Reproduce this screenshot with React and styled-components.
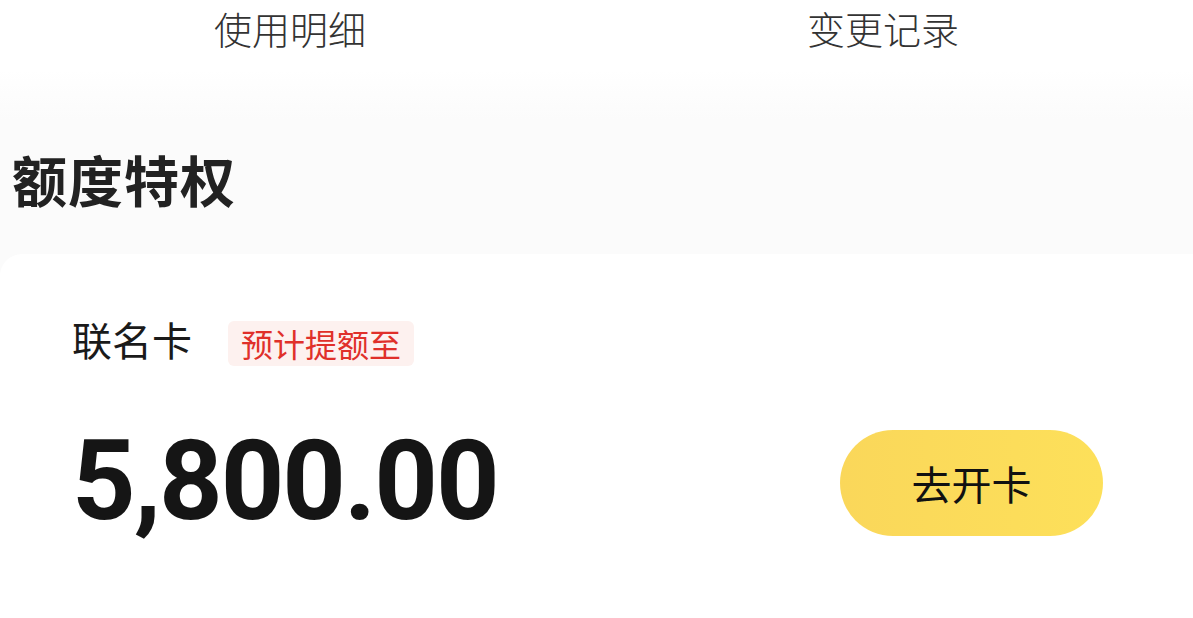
import React from "react";
import styled, { createGlobalStyle } from "styled-components";

const GlobalStyle = createGlobalStyle`
  html, body {
    margin: 0;
    padding: 0;
    background: #fbfbfb;
    font-family: "Noto Sans CJK SC", "Noto Sans", sans-serif;
  }
`;

const Page = styled.div`
  width: 1193px;
  height: 618px;
  overflow: hidden;
  background: linear-gradient(#ffffff 0, #ffffff 70px, #fbfbfb 120px, #fbfbfb 100%);
`;

const Tabs = styled.div`
  display: flex;
  height: 62px;
`;

const Tab = styled.div`
  flex: 0 0 ${(p) => p.w}px;
  text-align: center;
  font-size: 38px;
  font-weight: 300;
  color: #333;
  line-height: 56px;
`;

const Title = styled.h2`
  margin: 80px 0 0 12px;
  font-size: 55px;
  font-weight: 700;
  color: #222;
  line-height: 72px;
  letter-spacing: 1px;
`;

const Card = styled.div`
  margin-top: 40px;
  margin-right: -40px;
  background: #fff;
  border-radius: 22px 0 0 0;
  height: 400px;
  padding: 61px 0 0 72px;
  box-sizing: border-box;
`;

const CardHead = styled.div`
  display: flex;
  align-items: center;
  gap: 36px;
`;

const CardName = styled.span`
  font-size: 40px;
  color: #1a1a1a;
  line-height: 56px;
  margin-top: -4px;
`;

const Badge = styled.span`
  background: #fdf1ef;
  color: #e0302a;
  font-size: 32px;
  line-height: 45px;
  padding: 0 13px;
  border-radius: 6px;
  margin-top: 4px;
`;

const Row = styled.div`
  display: flex;
  align-items: center;
  justify-content: space-between;
  margin-top: 58px;
  padding-right: 130px;
`;

const Amount = styled.div`
  font-family: Roboto, "Liberation Sans", sans-serif;
  font-weight: 700;
  font-size: 111px;
  color: #151515;
  letter-spacing: -2px;
  line-height: 110px;
`;

const OpenButton = styled.button`
  width: 263px;
  height: 106px;
  border: none;
  border-radius: 53px;
  background: linear-gradient(90deg, #fad75a, #fde05a);
  font-family: "Noto Sans CJK SC", sans-serif;
  font-size: 40px;
  color: #111;
  margin-top: 5px;
`;

export default function App() {
  return (
    <>
      <GlobalStyle />
      <Page>
        <Tabs>
          <Tab w={580}>使用明细</Tab>
          <Tab w={606}>变更记录</Tab>
        </Tabs>
        <Title>额度特权</Title>
        <Card>
          <CardHead>
            <CardName>联名卡</CardName>
            <Badge>预计提额至</Badge>
          </CardHead>
          <Row>
            <Amount>5,800.00</Amount>
            <OpenButton>去开卡</OpenButton>
          </Row>
        </Card>
      </Page>
    </>
  );
}
